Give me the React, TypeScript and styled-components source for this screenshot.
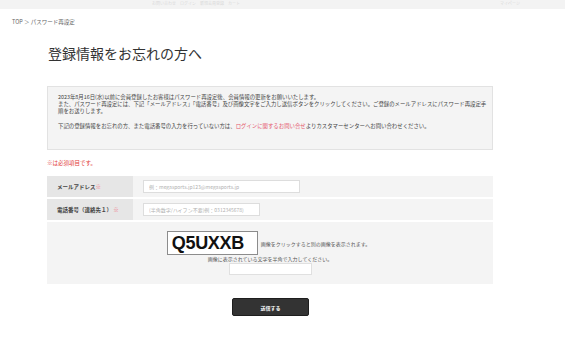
import React from 'react';
import styled, { createGlobalStyle } from 'styled-components';

const GlobalStyle = createGlobalStyle`
  html, body {
    margin: 0;
    padding: 0;
    background: #ffffff;
  }
  body {
    font-family: "Noto Sans CJK JP", "Noto Sans", sans-serif;
    color: #333333;
  }
`;

const App = () => {
  return (
    <Page>
      <GlobalStyle />
      <TopStrip>
        <span>お問い合わせ　ログイン　新規会員登録　カート</span>
        <span>マイページ</span>
      </TopStrip>
      <Breadcrumb>TOP ＞ パスワード再設定</Breadcrumb>
      <Main>
        <Title>登録情報をお忘れの方へ</Title>
        <InfoBox>
          <p>
            2023年8月16日(水)以前に会員登録したお客様はパスワード再設定後、会員情報の更新をお願いいたします。
            <br />
            また、パスワード再設定には、下記「メールアドレス」「電話番号」及び画像文字をご入力し送信ボタンをクリックしてください。ご登録のメールアドレスにパスワード再設定手順をお送りします。
          </p>
          <p>
            下記の登録情報をお忘れの方、また電話番号の入力を行っていない方は、
            <InfoLink>ログインに関するお問い合せ</InfoLink>
            よりカスタマーセンターへお問い合わせください。
          </p>
        </InfoBox>
        <Note>※は必須項目です。</Note>
        <FormTable>
          <Row>
            <LabelCell>
              メールアドレス<Req>※</Req>
            </LabelCell>
            <ValueCell>
              <TextInput $width={157} placeholder="例：megasports.jp123@megasports.jp" />
            </ValueCell>
          </Row>
          <Row>
            <LabelCell>
              電話番号（連絡先１） <Req>※</Req>
            </LabelCell>
            <ValueCell>
              <TextInput $width={117} placeholder="(半角数字/ハイフン不要)例：0312345678)" />
            </ValueCell>
          </Row>
          <CaptchaRow>
            <CaptchaLine>
              <CaptchaImage>Q5UXXB</CaptchaImage>
              <SmallText>画像をクリックすると別の画像を表示されます。</SmallText>
            </CaptchaLine>
            <SmallText>画像に表示されている文字を半角で入力してください。</SmallText>
            <CaptchaInput />
          </CaptchaRow>
        </FormTable>
        <ButtonRow>
          <SubmitButton>送信する</SubmitButton>
        </ButtonRow>
      </Main>
    </Page>
  );
};

export default App;

const Page = styled.div`
  width: 565px;
  min-height: 339px;
  background: #ffffff;
`;

const TopStrip = styled.div`
  height: 9px;
  box-sizing: border-box;
  padding: 1px 45px 0 152px;
  background: #f3f3f3;
  display: flex;
  justify-content: space-between;
  align-items: flex-start;
  span {
    font-size: 4px;
    line-height: 5px;
    color: #dadada;
  }
`;

const Breadcrumb = styled.div`
  margin: 9px 0 0 12px;
  font-size: 5.5px;
  line-height: 8px;
  color: #666666;
`;

const Main = styled.div`
  width: 446px;
  margin-left: 47px;
`;

const Title = styled.h1`
  margin: 17px 0 0 1px;
  font-size: 14px;
  line-height: 20px;
  font-weight: 400;
  color: #333333;
`;

const InfoBox = styled.div`
  margin-top: 23px;
  box-sizing: border-box;
  height: 64px;
  background: #f4f4f4;
  border: 1px solid #e2e2e2;
  padding: 7px 4px 0 10px;
  font-size: 5.4px;
  line-height: 7.2px;
  color: #444444;
  p {
    margin: 0 0 7px 0;
  }
`;

const InfoLink = styled.span`
  color: #e4566c;
`;

const Note = styled.div`
  margin-top: 9px;
  font-size: 5.5px;
  line-height: 8px;
  color: #e23b3b;
`;

const FormTable = styled.div`
  margin-top: 9px;
  display: flex;
  flex-direction: column;
  gap: 2px;
`;

const Row = styled.div`
  display: grid;
  grid-template-columns: 86px 1fr;
  height: 21px;
`;

const LabelCell = styled.div`
  background: #e6e6e6;
  display: flex;
  align-items: center;
  padding-left: 10px;
  font-size: 5.5px;
  font-weight: 700;
  color: #444444;
  white-space: pre;
`;

const Req = styled.span`
  color: #f07080;
`;

const ValueCell = styled.div`
  background: #f4f4f4;
  display: flex;
  align-items: center;
  padding-left: 10px;
`;

const TextInput = styled.input<{ $width: number }>`
  box-sizing: border-box;
  width: ${p => p.$width}px;
  height: 12.5px;
  border: 1px solid #dddddd;
  background: #ffffff;
  padding: 0 5px;
  font-family: "Noto Sans CJK JP", sans-serif;
  font-size: 5px;
  outline: none;
  &::placeholder {
    color: #b0b0b0;
  }
`;

const CaptchaRow = styled.div`
  background: #f4f4f4;
  height: 62px;
  box-sizing: border-box;
  padding-top: 9px;
  display: flex;
  flex-direction: column;
  align-items: center;
`;

const CaptchaLine = styled.div`
  display: flex;
  align-items: center;
  gap: 3px;
  margin-right: 3px;
`;

const CaptchaImage = styled.div`
  box-sizing: border-box;
  width: 91px;
  height: 24px;
  border: 1px solid #8c8c8c;
  background: #ffffff;
  padding-left: 4px;
  display: flex;
  align-items: center;
  font-family: "Liberation Sans", Arial, sans-serif;
  font-size: 18px;
  font-weight: 700;
  letter-spacing: -0.3px;
  color: #111111;
`;

const SmallText = styled.div`
  font-size: 5px;
  line-height: 7px;
  color: #555555;
`;

const CaptchaInput = styled.input`
  box-sizing: border-box;
  margin-top: 1px;
  margin-left: 1px;
  width: 83px;
  height: 12px;
  border: 1px solid #e0e0e0;
  background: #ffffff;
  outline: none;
`;

const ButtonRow = styled.div`
  margin-top: 14px;
  display: flex;
  justify-content: center;
`;

const SubmitButton = styled.button`
  box-sizing: border-box;
  width: 77px;
  height: 18px;
  margin-left: 1px;
  background: #333333;
  border: 1px solid #1e1e1e;
  border-radius: 2px;
  color: #ffffff;
  font-family: "Noto Sans CJK JP", sans-serif;
  font-size: 5px;
  font-weight: 700;
  cursor: pointer;
`;
